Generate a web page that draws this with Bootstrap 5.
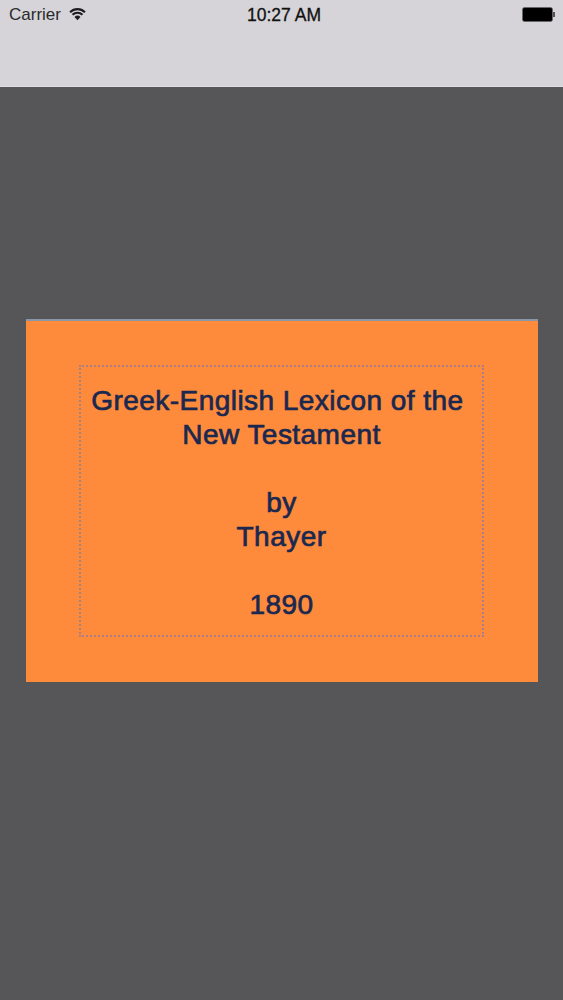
<!DOCTYPE html>
<html lang="en">
<head>
<meta charset="utf-8">
<title>Greek-English Lexicon</title>
<link href="https://cdn.jsdelivr.net/npm/bootstrap@5.3.0/dist/css/bootstrap.min.css" rel="stylesheet">
<style>
html,body{height:100%;}
body{background:#565557;font-family:"Liberation Sans",Arial,sans-serif;width:563px;height:1000px;overflow:hidden;}
.top-bar{height:87px;background:#d6d4d8;border-bottom:1px solid #dfdee0;font-size:17px;color:#2a2a2c;padding:6px 8px 0 9px;line-height:18px;}
.stat-col{flex:1 1 0;}
.clock{color:#111;font-size:17.5px;-webkit-text-stroke:.3px #111;margin-left:4px;}
.wifi-mark{margin-top:2px;}
.batt-mark{margin-top:1px;}
.stage{padding:232px 25.5px 0 25.5px;}
.cover{height:362.5px;background:#fe8b3b;border-top:2px solid #8a97a8;padding:44px 54px 45px 53px;}
.frame{height:272px;border:2px dotted #a9808a;padding-top:17px;padding-left:1px;color:#1a2850;font-size:28px;letter-spacing:.46px;line-height:34px;text-align:center;-webkit-text-stroke:.7px #1a2850;}
</style>
</head>
<body>
<div class="top-bar d-flex align-items-start">
  <div class="stat-col d-flex align-items-start gap-2">
    <span>Carrier</span>
    <svg class="wifi-mark" width="17" height="13" viewBox="0 0 16 12" aria-hidden="true"><path d="M1 3.8a10 10 0 0 1 14 0M3.3 6.2a6.8 6.8 0 0 1 9.4 0" fill="none" stroke="#1c1c1e" stroke-width="2"/><path d="M5.2 8.4a4 4 0 0 1 5.6 0L8 11.4z" fill="#1c1c1e"/></svg>
  </div>
  <div class="clock">10:27 AM</div>
  <div class="stat-col d-flex justify-content-end">
    <svg class="batt-mark" width="33" height="15" viewBox="0 0 33 15" aria-hidden="true"><rect x="0.5" y="0.5" width="30" height="14" rx="2" fill="#000" stroke="#666" stroke-width=".7"/><rect x="31.2" y="5" width="1.6" height="5" fill="#333"/></svg>
  </div>
</div>
<div class="stage">
  <div class="cover">
    <div class="frame">
      Greek-English Lexicon of the&nbsp;<br>New Testament<br><br>by<br>Thayer<br><br>1890
    </div>
  </div>
</div>
<script src="https://cdn.jsdelivr.net/npm/bootstrap@5.3.0/dist/js/bootstrap.bundle.min.js"></script>
</body>
</html>
